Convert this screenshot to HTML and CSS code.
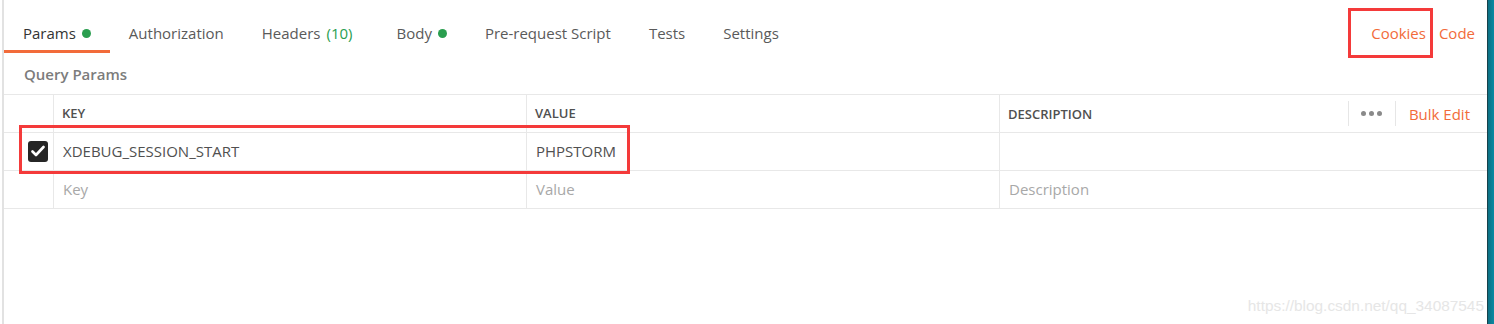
FILE: index.html
```html
<!DOCTYPE html>
<html lang="en">
<head>
  <meta charset="UTF-8">
  <meta name="viewport" content="width=device-width, initial-scale=1.0">
  <title>Params</title>
  <link rel="stylesheet" href="styles.css">
</head>
<body>
  <div class="screen">
    <main class="pane">
      <!-- 상단 탭 -->
      <nav class="tabs">
        <a class="tab active">Params <i class="dot"></i></a>
        <a class="tab">Authorization</a>
        <a class="tab tab-headers">Headers <span class="count">(10)</span></a>
        <a class="tab">Body <i class="dot"></i></a>
        <a class="tab">Pre-request Script</a>
        <a class="tab">Tests</a>
        <a class="tab">Settings</a>
        <div class="tab-links">
          <a class="link mark-cookies">Cookies</a>
          <a class="link">Code</a>
        </div>
      </nav>

      <h3 class="section-title">Query Params</h3>

      <!-- 파라미터 테이블 -->
      <div class="params">
        <div class="cell head"></div>
        <div class="cell head">KEY</div>
        <div class="cell head">VALUE</div>
        <div class="cell head desc-head">
          <span>DESCRIPTION</span>
          <div class="head-tools">
            <span class="more"><i></i><i></i><i></i></span>
            <a class="link bulk">Bulk Edit</a>
          </div>
        </div>

        <div class="cell check-cell">
          <span class="checkbox">
            <svg width="14" height="12" viewBox="0 0 14 12"><path d="M1.5 6.5 L5 10 L12.5 2" fill="none" stroke="#fff" stroke-width="2.6" stroke-linecap="round" stroke-linejoin="round"/></svg>
          </span>
        </div>
        <div class="cell">XDEBUG_SESSION_START</div>
        <div class="cell">PHPSTORM</div>
        <div class="cell"></div>

        <div class="cell"></div>
        <div class="cell placeholder">Key</div>
        <div class="cell placeholder">Value</div>
        <div class="cell placeholder">Description</div>
      </div>

      <span class="mark-row"></span>
      <span class="watermark">https://blog.csdn.net/qq_34087545</span>
    </main>
    <aside class="edge"></aside>
  </div>
</body>
</html>
```

FILE: styles.css
```css
*{margin: 0; padding: 0; box-sizing: border-box;}
body{
  font-family: "Open Sans", "Liberation Sans", sans-serif;
  background: #fff;
  color: #505050;
}
.screen{
  display: flex;
  width: 1494px; height: 324px;
  padding-left: 2px;
}
.pane{
  flex: 1;
  border-left: 2px solid #e2e2e2;
  position: relative;
  overflow: hidden;
}
.edge{
  width: 7px;
  border-left: 1px solid #16414b;
  background: linear-gradient(90deg, #0d6f83, #0a8aa3);
}

/* 탭 */
.tabs{
  display: flex;
  align-items: stretch;
  height: 53px;
  padding-top: 16px;
}
.tab{
  display: flex; align-items: center; gap: 6px;
  padding: 0 19px;
  font-size: 15px;
  color: #5a5a5a;
  border-bottom: 3px solid transparent;
  white-space: nowrap;
}
.tab.active{color: #333; border-bottom-color: #f26b3a;}
.tab-headers{padding-right: 25px;}
.count{color: #2a9e4f;}
.dot{
  display: inline-block;
  width: 9px; height: 9px;
  border-radius: 50%;
  background: #2a9e4f;
}
.tab-links{
  margin-left: auto;
  display: flex; align-items: center; gap: 13px;
  padding: 0 12px 3px 0;
}
.link{color: #f26b3a; font-size: 15px; font-weight: 400;}
.mark-cookies{
  outline: 3px solid #f43a3a;
  outline-offset: 0;
  padding: 12px 4px 12px 20px;
  margin: -12px -4px -12px -20px;
}

.section-title{
  font-size: 15px; font-weight: 600;
  color: #7c7c7c;
  padding: 11px 0 0 20px;
  height: 41px;
}

/* 테이블 */
.params{
  display: grid;
  grid-template-columns: 50px 473px 473px 1fr;
  border-top: 1px solid #e8e8e8;
}
.cell{
  display: flex; align-items: center;
  height: 38px;
  padding: 0 0 1px 9px;
  font-size: 15px;
  border-bottom: 1px solid #e8e8e8;
  border-right: 1px solid #e8e8e8;
  white-space: nowrap;
}
.cell:nth-child(4n){border-right: none;}
.head{
  font-size: 13px; font-weight: 600;
  color: #505050;
  padding-left: 8px;
}
.desc-head{justify-content: space-between; padding-right: 0; padding-bottom: 0;}
.head-tools{display: flex; align-items: center; height: 100%; padding: 6px 0;}
.more{
  height: 100%;
  display: flex; align-items: center; gap: 3px;
  padding: 0 13px 0 12px;
  border-left: 1px solid #e6e6e6;
  border-right: 1px solid #e6e6e6;
}
.more i{
  width: 5px; height: 5px; border-radius: 50%;
  background: #8a8a8a;
}
.bulk{padding: 0 17px 0 13px;}
.check-cell{justify-content: flex-start; padding-left: 24px;}
.checkbox{
  width: 20px; height: 21px;
  border-radius: 3px;
  background: #262626;
  display: flex; align-items: center; justify-content: center;
}
.placeholder{color: #a8a8a8;}

/* 강조 표시 */
.mark-row{
  position: absolute;
  left: 15px; top: 125px;
  width: 611px; height: 49px;
  border: 3px solid #f43a3a;
}
.watermark{
  position: absolute;
  right: 3px; bottom: 9px;
  font-family: "Liberation Sans", sans-serif;
  font-size: 15.4px;
  color: #e6e6e6;
}
```
